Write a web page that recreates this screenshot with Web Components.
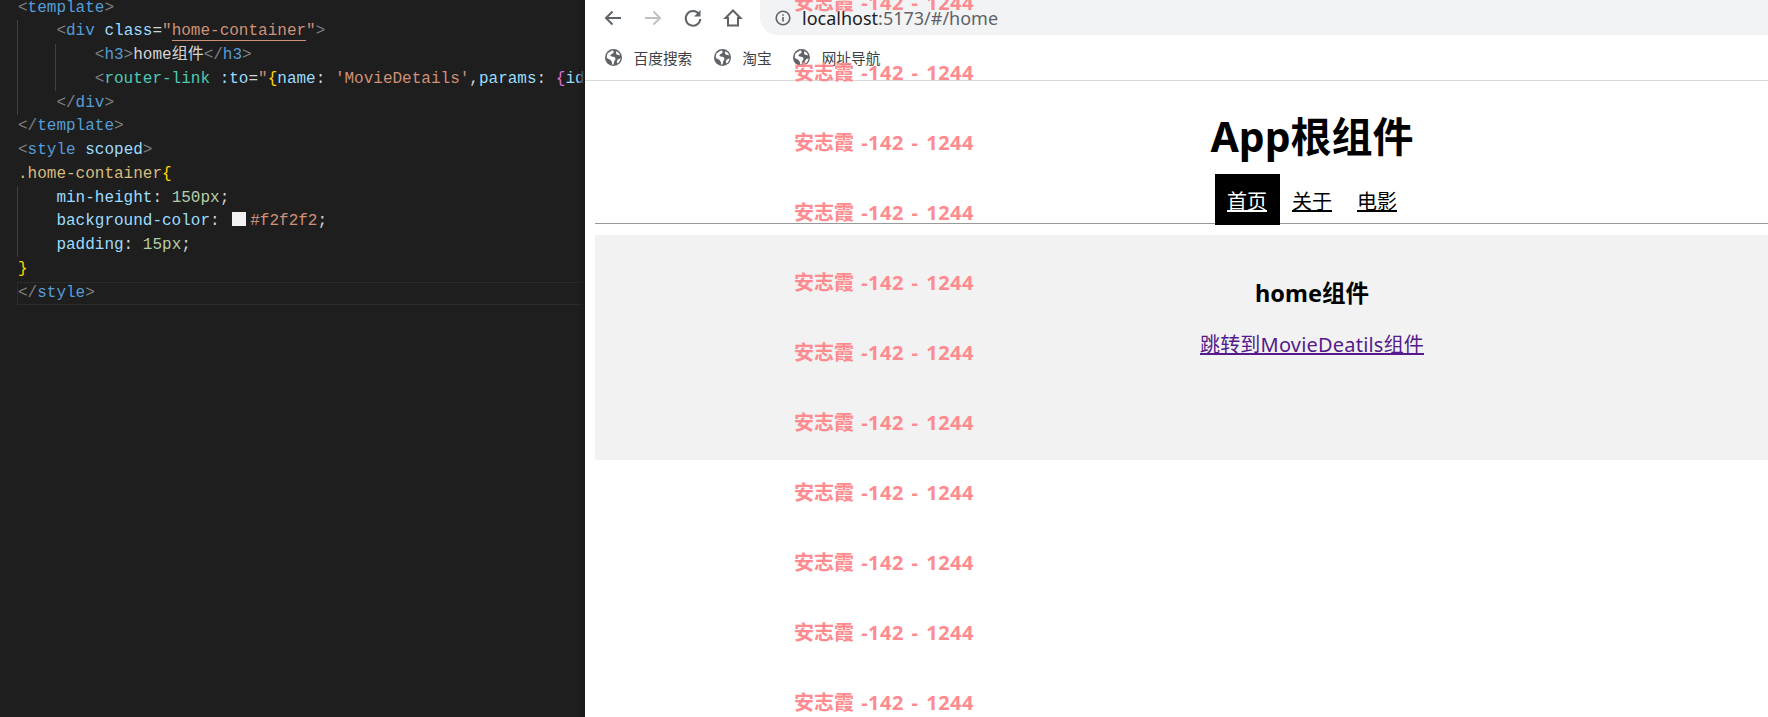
<!DOCTYPE html>
<html lang="zh">
<head>
<meta charset="utf-8">
<title>home</title>
<style>
    html, body { margin: 0; height: 100%; overflow: hidden; }
    body { display: flex; height: 717px; font-family: "Noto Sans", "Noto Sans CJK SC", sans-serif; }
</style>
</head>
<body>
<code-pane></code-pane>
<browser-window>
    <browser-toolbar></browser-toolbar>
    <bookmark-bar></bookmark-bar>
    <demo-page></demo-page>
    <water-mark></water-mark>
</browser-window>

<script>
const tok = (cls, text) => `<span class="${cls}">${text}</span>`;
const lt = tok('p', '&lt;');
const gt = tok('p', '&gt;');
const ltc = tok('p', '&lt;/');

class CodePane extends HTMLElement {
    constructor() {
        super();
        this.attachShadow({ mode: 'open' });
    }

    connectedCallback() {
        const lines = [
            [0, `${lt}${tok('t', 'template')}${gt}`],
            [4, `${lt}${tok('t', 'div')} ${tok('a', 'class')}${tok('w', '=')}${tok('s', '"')}<span class="s squiggle">home-container</span>${tok('s', '"')}${gt}`],
            [8, `${lt}${tok('t', 'h3')}${gt}${tok('w', 'home组件')}${ltc}${tok('t', 'h3')}${gt}`],
            [8, `${lt}${tok('c', 'router-link')} ${tok('a', ':to')}${tok('w', '=')}${tok('s', '"')}${tok('y', '{')}${tok('a', 'name')}${tok('w', ':')} ${tok('s', "'MovieDetails'")}${tok('w', ',')}${tok('a', 'params')}${tok('w', ':')} ${tok('m', '{')}${tok('a', 'id')}`],
            [4, `${ltc}${tok('t', 'div')}${gt}`],
            [0, `${ltc}${tok('t', 'template')}${gt}`],
            [0, `${lt}${tok('t', 'style')} ${tok('a', 'scoped')}${gt}`],
            [0, `${tok('g', '.home-container')}${tok('y', '{')}`],
            [4, `${tok('a', 'min-height')}${tok('w', ':')} ${tok('n', '150px')}${tok('w', ';')}`],
            [4, `${tok('a', 'background-color')}${tok('w', ':')} <i class="swatch"></i>${tok('s', '#f2f2f2')}${tok('w', ';')}`],
            [4, `${tok('a', 'padding')}${tok('w', ':')} ${tok('n', '15px')}${tok('w', ';')}`],
            [0, tok('y', '}')],
            [0, `${ltc}${tok('t', 'style')}${gt}`]
        ];
        const rows = lines.map(([indent, html], i) =>
            `<div class="line${i === 12 ? ' current' : ''}" style="padding-left:${indent * 9.6}px">${html}</div>`).join('');
        this.shadowRoot.innerHTML = `
            <style>
                :host {
                    display: block;
                    position: relative;
                    width: 585px;
                    flex: none;
                    background-color: #1e1e1e;
                    overflow: hidden;
                    font: 16px/23.75px "Liberation Mono", "Noto Sans CJK SC", monospace;
                    color: #d4d4d4;
                }
                .code {
                    margin: -3.5px 0 0 18px;
                    white-space: pre;
                }
                .line { height: 23.75px; }
                .current {
                    margin-left: -1px;
                    padding-left: 1px !important;
                    width: 580px;
                    box-shadow: inset 0 0 0 1px #2b2b2b;
                }
                .p { color: #808080; }
                .t { color: #569cd6; }
                .c { color: #4ec9b0; }
                .a { color: #9cdcfe; }
                .s { color: #ce9178; }
                .w { color: #d4d4d4; }
                .y { color: #ffd700; }
                .m { color: #da70d6; }
                .n { color: #b5cea8; }
                .g { color: #d7ba7d; }
                .squiggle { border-bottom: 1px solid #ce9178; }
                .swatch {
                    display: inline-block;
                    width: 14px;
                    height: 14px;
                    margin: 0 4px 0 3px;
                    background: #f2f2f2;
                    vertical-align: -1px;
                }
                .guide {
                    position: absolute;
                    width: 1px;
                    background: #404040;
                }
                .edge {
                    position: absolute;
                    top: 0;
                    bottom: 0;
                    right: 0;
                    width: 8px;
                    background: linear-gradient(to right, #1e1e1e00, #191919);
                }
            </style>
            <div class="code">${rows}</div>
            <div class="guide" style="left:17px;top:20px;height:95px"></div>
            <div class="guide" style="left:55px;top:44px;height:47px"></div>
            <div class="guide" style="left:17px;top:186px;height:71px"></div>
            <div class="edge"></div>
        `;
    }
}

class BrowserWindow extends HTMLElement {
    constructor() {
        super();
        this.attachShadow({ mode: 'open' });
        this.shadowRoot.innerHTML = `
            <style>
                :host {
                    display: flex;
                    flex-direction: column;
                    position: relative;
                    flex: 1;
                    min-width: 0;
                    background: #fff;
                    overflow: hidden;
                }
            </style>
            <slot></slot>
        `;
    }
}

class BrowserToolbar extends HTMLElement {
    constructor() {
        super();
        this.attachShadow({ mode: 'open' });
        this.shadowRoot.innerHTML = `
            <style>
                :host {
                    display: flex;
                    align-items: center;
                    height: 35px;
                    flex: none;
                }
                .nav {
                    display: flex;
                    align-items: center;
                    width: 175px;
                    padding-left: 17.5px;
                    box-sizing: border-box;
                    gap: 20px;
                    flex: none;
                }
                svg { display: block; width: 20px; height: 20px; fill: none; stroke: #5f6368; stroke-width: 2; }
                .off { stroke: #bdc1c6; }
                .omni {
                    flex: 1;
                    height: 35px;
                    background: #f1f3f4;
                    border-radius: 0 0 0 18px;
                    display: flex;
                    align-items: center;
                    gap: 11px;
                    padding-left: 15px;
                    font: 18px "Noto Sans", sans-serif;
                    color: #5f6368;
                }
                .omni svg { width: 16px; height: 16px; stroke-width: 1.6; }
                b { font-weight: 400; color: #202124; }
            </style>
            <div class="nav">
                <svg viewBox="0 0 20 20"><path d="M18 10H3M9.500 3.500 3 10l6.500 6.500"/></svg>
                <svg class="off" viewBox="0 0 20 20"><path d="M2 10h15M10.500 3.500 17 10l-6.500 6.500"/></svg>
                <svg viewBox="0 0 20 20"><path d="M16 6.200A7.300 7.300 0 1 0 17.300 11"/><path d="M17.500 2v6.500H11z" fill="#5f6368" stroke="none"/></svg>
                <svg viewBox="0 0 20 20"><path d="M10 2.500 2.500 10H5v7.500h10V10h2.500z"/></svg>
            </div>
            <div class="omni">
                <svg viewBox="0 0 16 16"><circle cx="8" cy="8" r="6.800"/><path d="M8 7v4.500M8 4.200v1.600"/></svg>
                <span><b>localhost</b>:5173/#/home</span>
            </div>
        `;
    }
}

class BookmarkItem extends HTMLElement {
    constructor() {
        super();
        this.attachShadow({ mode: 'open' });
        this.shadowRoot.innerHTML = `
            <style>
                :host {
                    display: inline-flex;
                    align-items: center;
                    gap: 11.5px;
                    font: 14.7px "Noto Sans CJK SC", sans-serif;
                    color: #3c4043;
                }
                svg { display: block; width: 17px; height: 17px; }
            </style>
            <svg viewBox="0 0 18 18">
                <circle cx="9" cy="9" r="9" fill="#5f6368"/>
                <path d="M7.500 1.500 2.800 4.500C2 6 1.800 8 2 9.500l3 1.700c1 .3 2.800 2.300 2.500 5.300l1.700 0c0-2 .5-3.500 1.300-4.500 1-1.200.8-3-.8-3.500-1.500-.4-3.500-.3-4-1.500 0-1.500 2.500-1.700 3.300-3 .3-.8 0-1.700-.5-2.500zM12 2.500c-.5 1.500-.8 3 .8 3.500 1.200.3 2.500.3 3.200.8-.5-2-2-3.500-4-4.300zM16.500 10c-2 .3-4 1.500-4 3.500 0 .8.300 1.500 1 1.800 1.500-1.300 2.700-3 3-5.300z" fill="#fff"/>
            </svg>
            <slot></slot>
        `;
    }
}

class BookmarkBar extends HTMLElement {
    constructor() {
        super();
        this.attachShadow({ mode: 'open' });
        this.shadowRoot.innerHTML = `
            <style>
                :host {
                    display: flex;
                    align-items: center;
                    gap: 21.5px;
                    height: 46px;
                    flex: none;
                    box-sizing: border-box;
                    padding-left: 20px;
                    border-bottom: 1px solid #d8d8d8;
                }
            </style>
            <bookmark-item>百度搜索</bookmark-item>
            <bookmark-item>淘宝</bookmark-item>
            <bookmark-item>网址导航</bookmark-item>
        `;
    }
}

class DemoPage extends HTMLElement {
    constructor() {
        super();
        this.attachShadow({ mode: 'open' });
        this.shadowRoot.innerHTML = `
            <style>
                :host {
                    display: block;
                    flex: none;
                    width: 1434px;
                    margin-left: 10px;
                    text-align: center;
                    font-family: "Noto Sans", "Noto Sans CJK SC", sans-serif;
                    color: #000;
                }
                h1 { margin: 0; padding-top: 27px; font-size: 41px; line-height: 56px; }
                nav {
                    display: flex;
                    justify-content: center;
                    height: 49px;
                    margin-top: 10px;
                    border-bottom: 1px solid #999;
                    font-size: 20px;
                }
                nav a {
                    display: block;
                    height: 51px;
                    line-height: 55px;
                    width: 65px;
                    color: #000;
                    text-decoration: underline;
                }
                nav a.active { background: #000; color: #fff; }
                .home {
                    margin-top: 11px;
                    height: 225px;
                    box-sizing: border-box;
                    padding: 15px;
                    background-color: #f2f2f2;
                }
                h3 { margin: 27px 0 0; font-size: 23.5px; line-height: 32px; }
                .link { display: block; margin-top: 22px; font-size: 20px; letter-spacing: .2px; line-height: 28px; color: #551a8b; text-decoration: underline; }
            </style>
            <h1>App根组件</h1>
            <nav>
                <a class="active">首页</a>
                <a>关于</a>
                <a>电影</a>
            </nav>
            <div class="home">
                <h3>home组件</h3>
                <a class="link">跳转到MovieDeatils组件</a>
            </div>
        `;
    }
}

class WaterMark extends HTMLElement {
    constructor() {
        super();
        this.attachShadow({ mode: 'open' });
        const rows = Array.from({ length: 11 }, () => '<div>安志霞 <span>-142 - 1244</span></div>').join('');
        this.shadowRoot.innerHTML = `
            <style>
                :host {
                    position: absolute;
                    top: -32px;
                    left: 209px;
                    pointer-events: none;
                    font: bold 20px/70px "Noto Sans", "Noto Sans CJK SC", sans-serif;
                    word-spacing: 2px;
                    color: #ff8a8f;
                }
                div { height: 70px; white-space: nowrap; }
                span { letter-spacing: .5px; }
            </style>
            ${rows}
        `;
    }
}

customElements.define('code-pane', CodePane);
customElements.define('browser-window', BrowserWindow);
customElements.define('browser-toolbar', BrowserToolbar);
customElements.define('bookmark-item', BookmarkItem);
customElements.define('bookmark-bar', BookmarkBar);
customElements.define('demo-page', DemoPage);
customElements.define('water-mark', WaterMark);
</script>
</body>
</html>
